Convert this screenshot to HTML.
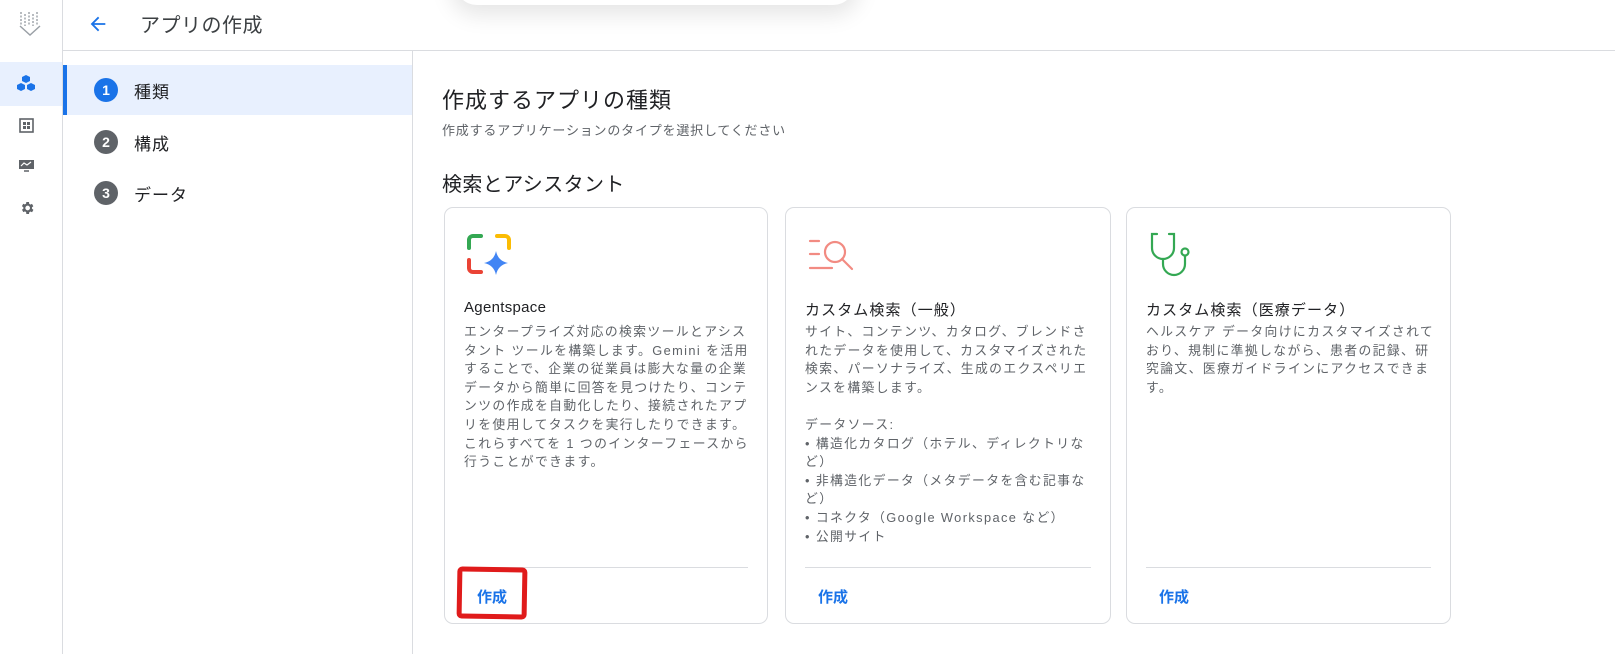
<!DOCTYPE html>
<html><head><meta charset="utf-8"><style>
*{margin:0;padding:0;box-sizing:border-box}
body{width:1615px;height:654px;overflow:hidden;background:#fff;font-family:"Liberation Sans","Noto Sans CJK JP",sans-serif;color:#202124;position:relative}
.abs{position:absolute}
.side{left:0;top:0;width:63px;height:654px;border-right:1px solid #dadce0}
.hdr{left:63px;top:0;right:0;height:51px;border-bottom:1px solid #dadce0}
.steps{left:63px;top:51px;width:350px;height:603px;border-right:1px solid #dadce0}
.step{position:absolute;left:0;width:349px;height:50px;font-size:17px;letter-spacing:1px;display:flex;align-items:center}
.num{width:24px;height:24px;border-radius:50%;background:#5f6368;color:#fff;font-size:14px;font-weight:bold;display:flex;align-items:center;justify-content:center;margin-left:31px;margin-right:16px;letter-spacing:0}
.card{position:absolute;top:207px;height:417px;border:1px solid #dadce0;border-radius:9px;background:#fff}
.ct{position:absolute;left:19px;top:91px;font-size:15px;letter-spacing:1.1px;color:#202124}
.cd{position:absolute;left:19px;top:115px;width:291px;font-size:12.8px;letter-spacing:1.4px;line-height:18.6px;color:#5f6368}
.div{position:absolute;left:19px;right:19px;top:359px;border-top:1px solid #dadce0}
.btn{position:absolute;left:32px;top:378px;font-size:15px;color:#1a73e8;font-weight:bold}
</style></head><body>
<div class="abs" style="left:455px;top:-40px;width:400px;height:45px;border-radius:22px;box-shadow:0 6px 22px 4px rgba(0,0,0,.10);background:#fff"></div>
<div class="abs side">
 <svg class="abs" style="left:17px;top:10px" width="26" height="28" viewBox="0 0 26 28"><g stroke="#9aa0a6" stroke-width="1.4"><path d="M4 2v14M8 4v12M12 2v14M16 4v12M20 2v14" stroke-dasharray="2 1.5"/><path d="M3 16l10 9 10-9" fill="none"/></g></svg>
 <div class="abs" style="left:0;top:62px;width:62px;height:44px;background:#e8f0fe"></div>
 <svg class="abs" style="left:15px;top:74px" width="22" height="20" viewBox="0 0 22 20"><g fill="#1a73e8"><path d="M11 1l4 2v4l-4 2-4-2V3z"/><path d="M6 9l4 2v4l-4 2-4-2v-4z"/><path d="M16 9l4 2v4l-4 2-4-2v-4z"/></g></svg>
 <svg class="abs" style="left:19px;top:118px" width="15" height="15" viewBox="0 0 15 15"><rect x="1" y="1" width="13" height="13" fill="none" stroke="#5f6368" stroke-width="1.6"/><rect x="4" y="4" width="3" height="3" fill="#5f6368"/><rect x="8" y="4" width="3" height="3" fill="#5f6368"/><rect x="4" y="8" width="3" height="3" fill="#5f6368"/><rect x="8" y="8" width="3" height="3" fill="#5f6368"/></svg>
 <svg class="abs" style="left:18px;top:159px" width="17" height="13" viewBox="0 0 17 13"><rect x="1" y="1" width="15" height="9" fill="#5f6368"/><path d="M3 7l3-3 3 2 4-3" stroke="#fff" fill="none" stroke-width="1.2"/><path d="M6 12h5" stroke="#5f6368" stroke-width="1.5"/></svg>
 <svg class="abs" style="left:19px;top:200px" width="16" height="16" viewBox="0 0 24 24"><path fill="#5f6368" d="M19.4 13a7.5 7.5 0 0 0 0-2l2.1-1.6-2-3.5-2.5 1a7 7 0 0 0-1.7-1L15 3h-4l-.4 2.7a7 7 0 0 0-1.7 1l-2.5-1-2 3.5L6.6 11a7.5 7.5 0 0 0 0 2l-2.1 1.6 2 3.5 2.5-1a7 7 0 0 0 1.7 1L11 21h4l.4-2.7a7 7 0 0 0 1.7-1l2.5 1 2-3.5zM13 15.5a3.5 3.5 0 1 1 0-7 3.5 3.5 0 0 1 0 7z"/></svg>
</div>
<div class="abs hdr">
 <svg class="abs" style="left:24px;top:13px" width="22" height="22" viewBox="0 0 24 24"><path d="M20 11H7.8l5.6-5.6L12 4l-8 8 8 8 1.4-1.4L7.8 13H20z" fill="#1a73e8"/></svg>
 <div class="abs" style="left:77px;top:9px;font-size:20px;letter-spacing:.5px;color:#3c4043">アプリの作成</div>
</div>
<div class="abs steps">
 <div class="step" style="top:14px;background:#e8f0fe;border-left:4px solid #1a73e8"><div class="num" style="background:#1a73e8;margin-left:27px">1</div>種類</div>
 <div class="step" style="top:66px"><div class="num">2</div>構成</div>
 <div class="step" style="top:117px"><div class="num">3</div>データ</div>
</div>
<div class="abs" style="left:442px;top:83px;font-size:22px;letter-spacing:1px;color:#202124">作成するアプリの種類</div>
<div class="abs" style="left:442px;top:120px;font-size:13px;letter-spacing:.8px;color:#5f6368">作成するアプリケーションのタイプを選択してください</div>
<div class="abs" style="left:442px;top:168px;font-size:20px;letter-spacing:.4px;color:#202124">検索とアシスタント</div>

<div class="card" style="left:444px;width:324px">
 <svg class="abs" style="left:21px;top:25px" width="46" height="46" viewBox="0 0 46 46"><g fill="none" stroke-width="4" stroke-linecap="round"><path d="M3 15V7a4 4 0 0 1 4-4h8" stroke="#34a853"/><path d="M31 3h8a4 4 0 0 1 4 4v8" stroke="#fbbc04"/><path d="M3 27v8a4 4 0 0 0 4 4h8" stroke="#ea4335"/></g><path d="M30 18q2 10 12 12q-10 2-12 12q-2-10-12-12q10-2 12-12z" fill="#4285f4"/></svg>
 <div class="ct" style="letter-spacing:.3px">Agentspace</div>
 <div class="cd">エンタープライズ対応の検索ツールとアシスタント ツールを構築します。Gemini を活用することで、企業の従業員は膨大な量の企業データから簡単に回答を見つけたり、コンテンツの作成を自動化したり、接続されたアプリを使用してタスクを実行したりできます。これらすべてを 1 つのインターフェースから行うことができます。</div>
 <div class="div"></div>
 <div class="btn">作成</div>
</div>
<div class="card" style="left:785px;width:326px">
 <svg class="abs" style="left:22px;top:29px" width="48" height="38" viewBox="0 0 48 38"><g stroke="#f28b82" stroke-width="2.2" fill="none" stroke-linecap="round"><path d="M2 4h9M2 17h9M2 31h22"/><circle cx="27" cy="15" r="10"/><path d="M34 22l10 10"/></g></svg>
 <div class="ct">カスタム検索（一般）</div>
 <div class="cd">サイト、コンテンツ、カタログ、ブレンドされたデータを使用して、カスタマイズされた検索、パーソナライズ、生成のエクスペリエンスを構築します。<br><br>データソース:<br>• 構造化カタログ（ホテル、ディレクトリなど）<br>• 非構造化データ（メタデータを含む記事など）<br>• コネクタ（Google Workspace など）<br>• 公開サイト</div>
 <div class="div"></div>
 <div class="btn">作成</div>
</div>
<div class="card" style="left:1126px;width:325px">
 <svg class="abs" style="left:21px;top:24px" width="48" height="48" viewBox="0 0 48 48"><g stroke="#34a853" stroke-width="2.2" fill="none" stroke-linecap="round"><path d="M9 2H4v14a11 11 0 0 0 22 0V2h-5"/><path d="M15 27v5a11 11 0 0 0 22 0V24"/><circle cx="37" cy="20" r="3.5"/></g></svg>
 <div class="ct">カスタム検索（医療データ）</div>
 <div class="cd">ヘルスケア データ向けにカスタマイズされており、規制に準拠しながら、患者の記録、研究論文、医療ガイドラインにアクセスできます。</div>
 <div class="div"></div>
 <div class="btn">作成</div>
</div>
<div class="abs" style="left:457px;top:567px;width:70px;height:52px;border:5px solid #e01b1b;border-radius:5px;transform:rotate(1deg)"></div>
</body></html>
